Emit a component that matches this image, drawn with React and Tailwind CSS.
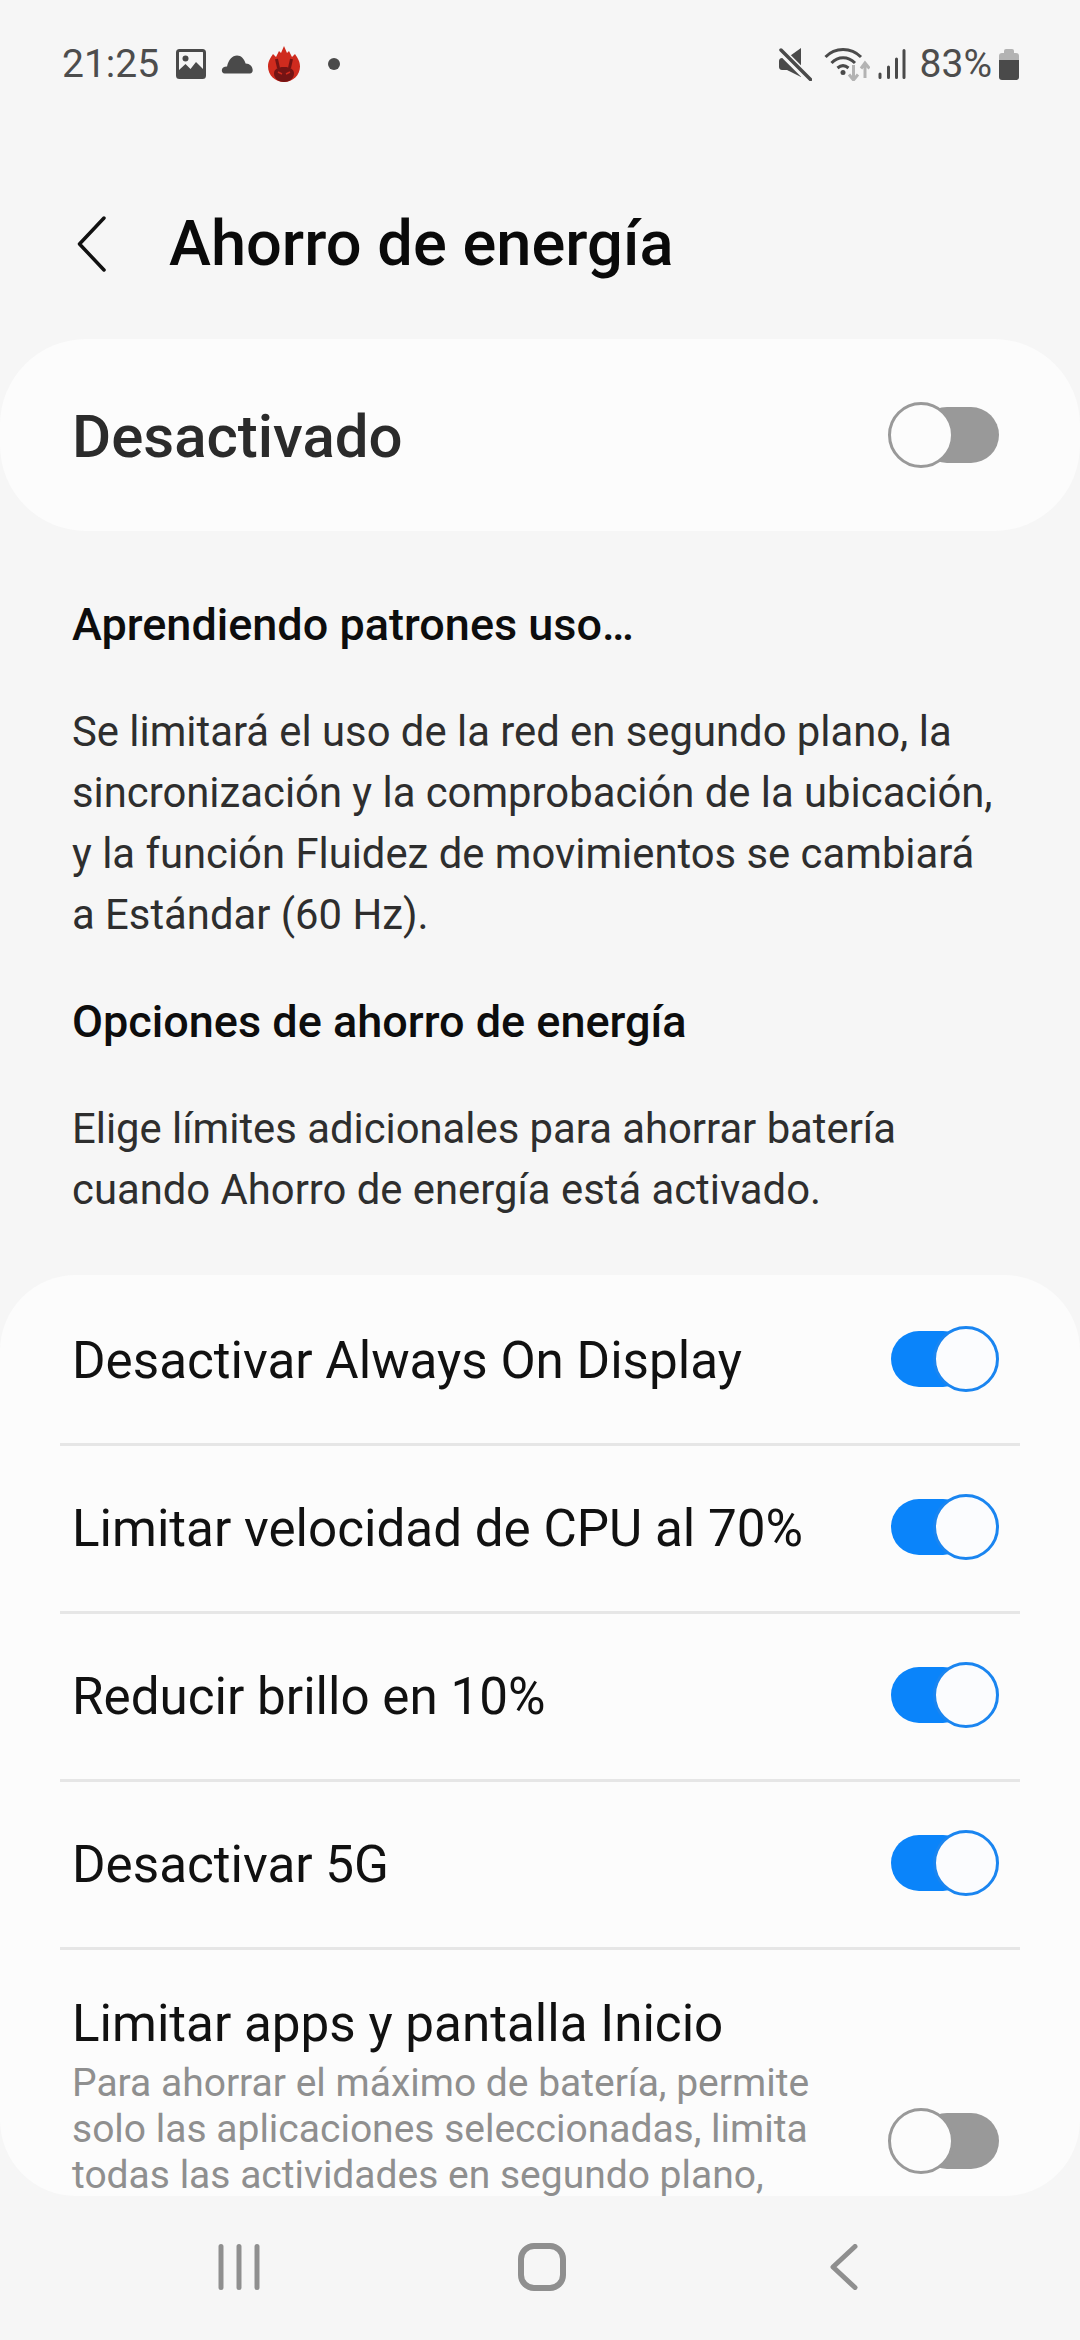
import React from 'react';

function Toggle({ on }) {
  if (on) {
    return (
      <div className="relative h-[66px] w-[108px] shrink-0">
        <div className="absolute left-0 top-[5px] h-[56px] w-[80px] rounded-full bg-[#0a84fa]" />
        <div className="absolute right-0 top-0 h-[66px] w-[66px] rounded-full border-[3px] border-[#1a85f0] bg-[#fbfcfe]" />
      </div>
    );
  }
  return (
    <div className="relative h-[66px] w-[111px] shrink-0">
      <div className="absolute right-0 top-[5px] h-[56px] w-[80px] rounded-full bg-[#999999]" />
      <div className="absolute left-0 top-0 h-[66px] w-[66px] rounded-full border-[3px] border-[#999999] bg-[#fcfcfc]" />
    </div>
  );
}

function StatusLeft() {
  return (
    <div className="flex items-center">
      <span className="text-[39px] leading-none text-[#4d4d4d]">21:25</span>
      <svg className="ml-[17px]" width="30" height="30" viewBox="0 0 30 30">
        <rect x="1.5" y="1.5" width="27" height="27" rx="2" fill="none" stroke="#4a4a4a" strokeWidth="3" />
        <circle cx="9.5" cy="9.5" r="3" fill="#4a4a4a" />
        <path d="M3 27V21L9.500 15L14.500 20L20 13L28 21V27Z" fill="#4a4a4a" />
      </svg>
      <svg className="ml-[15px]" width="33" height="19" viewBox="0 0 33 20">
        <path d="M3 19.5C1 19.5 0 18 0 16C0 13.5 2 12 5.5 12C7 5 11 0.5 16 0.5C20.5 0.5 23.5 4 25 9C29.5 9 32.5 12.5 32.5 16C32.5 18 31.5 19.5 29.5 19.5Z" fill="#4a4a4a" />
      </svg>
      <svg className="ml-[14px]" width="32" height="36" viewBox="0 0 32 36">
        <path d="M16 36C7 36 0 29 0 20.5C0 15 2.500 12 5 8L8 11L11 5L13 7L16 0L19 7L21 5L24 11L27 8C29.500 12 32 15 32 20.500C32 29 25 36 16 36Z" fill="#cf2b1e" />
        <path d="M16 36C10 36 6 32 6 27.500C6 23.500 9.500 21 16 21C22.500 21 26 23.500 26 27.500C26 32 22 36 16 36Z" fill="#741414" />
        <path d="M10.500 22L8.500 13M21.500 22L23.500 13" stroke="#741414" strokeWidth="3" />
        <path d="M10 26L14 28M22 26L18 28" stroke="#cf2b1e" strokeWidth="1.500" />
      </svg>
      <div className="ml-[28px] h-[12px] w-[12px] rounded-full bg-[#4a4a4a]" />
    </div>
  );
}

function StatusRight() {
  return (
    <div className="flex items-center">
      <svg width="33" height="33" viewBox="0 0 33 33">
        <path d="M0 13C0 11 1.500 10 3 10H8L22 0V29L8 22H3C1.500 22 0 21 0 19Z" fill="#4a4a4a" />
        <path d="M0 1L32 33" stroke="#f6f6f6" strokeWidth="8" />
        <path d="M2 2L31.500 31.500" stroke="#4a4a4a" strokeWidth="3.500" strokeLinecap="round" />
      </svg>
      <svg className="ml-[12px]" width="46" height="34" viewBox="0 0 46 34">
        <path d="M1.500 10C11 0 27 0 37 10" fill="none" stroke="#4a4a4a" strokeWidth="3" />
        <path d="M7.500 16C14 9 24 9 31 16" fill="none" stroke="#4a4a4a" strokeWidth="3" />
        <path d="M13.500 21C17 18 21 18 24.500 21" fill="none" stroke="#4a4a4a" strokeWidth="3" />
        <circle cx="19" cy="25.500" r="2.500" fill="#4a4a4a" />
        <path d="M29.500 18V32M25 27.500L29.500 33L34 27.500" fill="none" stroke="#b3b3b3" strokeWidth="3" />
        <path d="M41 31V17M37 21.500L41 16L45.500 21.500" fill="none" stroke="#b3b3b3" strokeWidth="3" />
      </svg>
      <svg className="ml-[8px]" width="28" height="30" viewBox="0 0 28 30">
        <path d="M2 28.500V25M10.500 28.500V18M18.500 28.500V10M26 28.500V1.500" stroke="#4a4a4a" strokeWidth="3" strokeLinecap="round" />
      </svg>
      <span className="ml-[14px] text-[39px] leading-none text-[#4d4d4d]">83%</span>
      <div className="ml-[7px] flex w-[20px] flex-col items-center">
        <div className="h-[4px] w-[10px] rounded-t-[2px] bg-[#b3b3b3]" />
        <div className="h-[7px] w-[20px] rounded-t-[3px] bg-[#b3b3b3]" />
        <div className="h-[20px] w-[20px] rounded-b-[3px] bg-[#4a4a4a]" />
      </div>
    </div>
  );
}

function Row({ label }) {
  return (
    <div className="mx-[60px] flex h-[168px] items-center justify-between border-b-[3px] border-[#e6e6e6] pb-[3px] pl-[12px] pr-[21px]">
      <span className="mt-[4px] text-[51.2px] leading-none text-[#111111]">{label}</span>
      <Toggle on />
    </div>
  );
}

export default function App() {
  return (
    <div className="flex h-[2340px] w-[1080px] flex-col overflow-hidden bg-[#f6f6f6] font-['Roboto',sans-serif]">
      <div className="flex h-[128px] items-center justify-between pl-[62px] pr-[61px]">
        <StatusLeft />
        <StatusRight />
      </div>

      <div className="flex h-[211px] items-center pl-[77px] pt-[21px]">
        <svg width="30" height="56" viewBox="0 0 30 56">
          <path d="M27 2L2.500 28L27 54" fill="none" stroke="#111111" strokeWidth="3.500" strokeLinecap="round" strokeLinejoin="round" />
        </svg>
        <span className="ml-[62px] text-[63.2px] font-medium leading-none text-[#0a0a0a]">Ahorro de energía</span>
      </div>

      <div className="flex h-[192px] items-center justify-between rounded-[86px] bg-[#fcfcfc] pl-[72px] pr-[81px]">
        <span className="mt-[4px] text-[60px] font-medium leading-none text-[#2b2b2b]">Desactivado</span>
        <Toggle />
      </div>

      <div className="px-[72px] pt-[63px]">
        <h2 className="text-[45px] font-medium leading-[61px] text-[#0d0d0d]">Aprendiendo patrones uso…</h2>
        <p className="mt-[46px] whitespace-nowrap text-[41.8px] leading-[61px] text-[#2e2e2e]">
          Se limitará el uso de la red en segundo plano, la<br />
          sincronización y la comprobación de la ubicación,<br />
          y la función Fluidez de movimientos se cambiará<br />
          a Estándar (60 Hz).
        </p>
        <h2 className="mt-[46px] text-[45px] font-medium leading-[61px] text-[#0d0d0d]">Opciones de ahorro de energía</h2>
        <p className="mt-[46px] whitespace-nowrap text-[41.8px] leading-[61px] text-[#2e2e2e]">
          Elige límites adicionales para ahorrar batería<br />
          cuando Ahorro de energía está activado.
        </p>
      </div>

      <div className="mt-[55px] h-[921px] overflow-hidden rounded-[76px] bg-[#fcfcfc] pt-[3px]">
        <Row label="Desactivar Always On Display" />
        <Row label="Limitar velocidad de CPU al 70%" />
        <Row label="Reducir brillo en 10%" />
        <Row label="Desactivar 5G" />
        <div className="flex h-[382px] items-center justify-between pl-[72px] pr-[81px]">
          <div className="self-start pt-[42px]">
            <div className="text-[51.2px] leading-[64px] text-[#111111]">Limitar apps y pantalla Inicio</div>
            <div className="mt-[4px] whitespace-nowrap text-[39px] leading-[46px] text-[#8f8f8f]">
              Para ahorrar el máximo de batería, permite<br />
              solo las aplicaciones seleccionadas, limita<br />
              todas las actividades en segundo plano,
            </div>
          </div>
          <Toggle />
        </div>
      </div>

      <div className="flex flex-1 items-center pb-[2px] pl-[217px]">
        <svg width="44" height="46" viewBox="0 0 44 46">
          <path d="M4 2.500V43.500M22 2.500V43.500M40 2.500V43.500" stroke="#8f8f8f" strokeWidth="5" strokeLinecap="round" />
        </svg>
        <svg className="ml-[257px]" width="48" height="48" viewBox="0 0 48 48">
          <rect x="3" y="3" width="42" height="42" rx="13" fill="none" stroke="#8f8f8f" strokeWidth="6" />
        </svg>
        <svg className="ml-[264px]" width="28" height="46" viewBox="0 0 28 46">
          <path d="M25 2.500L3 23L25 43.500" fill="none" stroke="#8f8f8f" strokeWidth="5" strokeLinecap="round" strokeLinejoin="round" />
        </svg>
      </div>
    </div>
  );
}
